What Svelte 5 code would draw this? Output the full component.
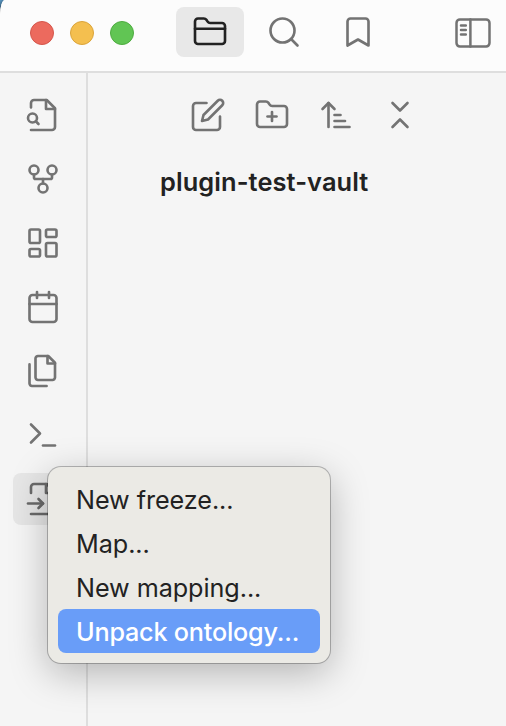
<script>
  const tabs = [
    {
      name: 'Files',
      active: true,
      paths: [
        'M20 20a2 2 0 0 0 2-2V8a2 2 0 0 0-2-2h-7.9a2 2 0 0 1-1.69-.9L9.6 3.9A2 2 0 0 0 7.93 3H4a2 2 0 0 0-2 2v13a2 2 0 0 0 2 2Z',
        'M2 9.8h20'
      ]
    },
    { name: 'Search', paths: ['M19 11a8 8 0 1 1-16 0 8 8 0 0 1 16 0z', 'm21 21-4.3-4.3'] },
    { name: 'Bookmarks', paths: ['m19 21-7-4-7 4V5a2 2 0 0 1 2-2h10a2 2 0 0 1 2 2v16z'] }
  ];

  const ribbon = [
    {
      name: 'Quick switcher',
      paths: [
        'M4 22h14a2 2 0 0 0 2-2V7.5L14.5 2H6a2 2 0 0 0-2 2v3',
        'M14 2v6h6',
        'M5 17a3 3 0 1 0 0-6 3 3 0 0 0 0 6z',
        'm9 18-1.8-1.8'
      ]
    },
    {
      name: 'Graph view',
      paths: [
        'M12 21a3 3 0 1 0 0-6 3 3 0 0 0 0 6z',
        'M6 9a3 3 0 1 0 0-6 3 3 0 0 0 0 6z',
        'M18 9a3 3 0 1 0 0-6 3 3 0 0 0 0 6z',
        'M18 9v2c0 .6-.4 1-1 1H7c-.6 0-1-.4-1-1V9',
        'M12 12v3'
      ]
    },
    {
      name: 'Canvas',
      paths: [
        'M4 3h5a1 1 0 0 1 1 1v7a1 1 0 0 1-1 1H4a1 1 0 0 1-1-1V4a1 1 0 0 1 1-1z',
        'M15 3h5a1 1 0 0 1 1 1v3a1 1 0 0 1-1 1h-5a1 1 0 0 1-1-1V4a1 1 0 0 1 1-1z',
        'M15 12h5a1 1 0 0 1 1 1v7a1 1 0 0 1-1 1h-5a1 1 0 0 1-1-1v-7a1 1 0 0 1 1-1z',
        'M4 16h5a1 1 0 0 1 1 1v3a1 1 0 0 1-1 1H4a1 1 0 0 1-1-1v-3a1 1 0 0 1 1-1z'
      ]
    },
    {
      name: 'Daily note',
      paths: [
        'M5 4h14a2 2 0 0 1 2 2v14a2 2 0 0 1-2 2H5a2 2 0 0 1-2-2V6a2 2 0 0 1 2-2z',
        'M16 2v4',
        'M8 2v4',
        'M3 10h18'
      ]
    },
    {
      name: 'Templates',
      paths: [
        'M15.5 2H8.6c-.4 0-.8.2-1.1.5-.3.3-.5.7-.5 1.1v12.8c0 .4.2.8.5 1.1.3.3.7.5 1.1.5h9.8c.4 0 .8-.2 1.1-.5.3-.3.5-.7.5-1.1V6.5L15.5 2z',
        'M3 7.6v12.8c0 .4.2.8.5 1.1.3.3.7.5 1.1.5h9.8',
        'M15 2v5h5'
      ]
    },
    { name: 'Command palette', paths: ['m4 17 6-6-6-6', 'M12 19h8'] },
    {
      name: 'Ontology',
      active: true,
      paths: [
        'M4 22h14a2 2 0 0 0 2-2V7.5L14.5 2H6a2 2 0 0 0-2 2v4',
        'M14 2v6h6',
        'M2 15h10',
        'm9 18 3-3-3-3'
      ]
    }
  ];

  const actions = [
    {
      name: 'New note',
      paths: [
        'M11 4H4a2 2 0 0 0-2 2v14a2 2 0 0 0 2 2h14a2 2 0 0 0 2-2v-7',
        'M18.5 2.5a2.12 2.12 0 0 1 3 3L12 15l-4 1 1-4 9.5-9.5z'
      ]
    },
    {
      name: 'New folder',
      paths: [
        'M4 20h16a2 2 0 0 0 2-2V8a2 2 0 0 0-2-2h-7.93a2 2 0 0 1-1.66-.9l-.82-1.2A2 2 0 0 0 7.93 3H4a2 2 0 0 0-2 2v13c0 1.1.9 2 2 2z',
        'M12 10v6',
        'M9 13h6'
      ]
    },
    { name: 'Sort order', paths: ['m3 8 4-4 4 4', 'M7 4v16', 'M11 12h4', 'M11 16h7', 'M11 20h10'] },
    { name: 'Collapse all', paths: ['m7 20 5-5 5 5', 'm7 4 5 5 5-5'] }
  ];

  const menu = ['New freeze...', 'Map...', 'New mapping...', 'Unpack ontology...'];
  let selected = $state(3);
</script>

{#snippet icon(paths)}
  <svg class="icon" viewBox="0 0 24 24" aria-hidden="true">
    {#each paths as d}<path {d} />{/each}
  </svg>
{/snippet}

<div class="desktop">
  <div class="window">
    <header>
      <div class="lights">
        <i class="close"></i><i class="minimize"></i><i class="zoom"></i>
      </div>
      <nav class="tabs">
        {#each tabs as tab}
          <button class="tab" class:active={tab.active} aria-label={tab.name}>{@render icon(tab.paths)}</button>
        {/each}
      </nav>
      <button class="toggle" aria-label="Toggle sidebar">
        <svg viewBox="0 0 36 30" aria-hidden="true">
          <rect x="1.5" y="1.5" width="33" height="27" rx="3.4" />
          <path d="M15.4 1.5v27M6 7.5h4.8M6 12h4.8M6 16.5h4.8" />
        </svg>
      </button>
    </header>
    <div class="body">
      <aside>
        {#each ribbon as item}
          <button class="ribbon-item" class:active={item.active} aria-label={item.name}>{@render icon(item.paths)}</button>
        {/each}
      </aside>
      <main>
        <div class="actions">
          {#each actions as action}
            <button aria-label={action.name}>{@render icon(action.paths)}</button>
          {/each}
        </div>
        <div class="vault">plugin-test-vault</div>
      </main>
    </div>
  </div>

  <div class="menu" role="menu">
    {#each menu as label, i}
      <button role="menuitem" class:selected={i === selected} onmouseenter={() => (selected = i)}>{label}</button>
    {/each}
  </div>
</div>

<style>
  .desktop {
    position: relative;
    width: 506px;
    height: 726px;
    overflow: hidden;
    background: linear-gradient(135deg, #5d9bc8 0, #39617f 5px, #222 9px);
    font-family: Inter, "Liberation Sans", sans-serif;
    color: #222;
  }
  .window {
    display: flex;
    flex-direction: column;
    height: 100%;
    overflow: hidden;
    background: #f5f5f5;
    border-top-left-radius: 5px 15px;
  }
  button {
    display: flex;
    align-items: center;
    justify-content: center;
    margin: 0;
    padding: 0;
    border: 0;
    background: none;
    color: #737373;
    font: inherit;
  }
  svg {
    display: block;
    flex: none;
    fill: none;
    stroke: currentColor;
    stroke-linecap: round;
    stroke-linejoin: round;
  }
  .icon {
    width: 36px;
    height: 36px;
    stroke-width: 1.75;
  }
  header {
    display: flex;
    flex: none;
    box-sizing: border-box;
    height: 73px;
    padding: 7px 15px 0 30px;
    background: #fcfcfc;
    border-bottom: 2px solid #dedede;
  }
  .lights {
    display: flex;
    gap: 16px;
    padding-top: 14px;
  }
  .lights i {
    box-sizing: border-box;
    width: 24px;
    height: 24px;
    border: 1px solid;
    border-radius: 50%;
  }
  .lights .close { background: #ec6a5e; border-color: #d5564b; }
  .lights .minimize { background: #f4bf4f; border-color: #dba43a; }
  .lights .zoom { background: #61c554; border-color: #4eac40; }
  .tabs {
    display: flex;
    gap: 6px;
    margin-left: 42px;
  }
  .tab {
    width: 68px;
    height: 50px;
    border-radius: 8px;
  }
  .tab.active {
    background: #e8e8e8;
    color: #222;
  }
  .toggle {
    height: 52px;
    margin-left: auto;
  }
  .toggle svg {
    width: 36px;
    height: 30px;
    stroke-width: 2.5;
  }
  .body {
    display: flex;
    flex: 1;
  }
  aside {
    display: flex;
    flex-direction: column;
    gap: 12px;
    box-sizing: border-box;
    width: 88px;
    padding: 16px 0 0 13px;
    border-right: 2px solid #dedede;
  }
  .ribbon-item {
    width: 60px;
    height: 52px;
    border-radius: 8px;
  }
  .ribbon-item.active {
    background: #e6e6e6;
    color: #6a6a6a;
  }
  main {
    flex: 1;
  }
  .actions {
    display: flex;
    gap: 28px;
    padding: 24px 0 0 102px;
  }
  .vault {
    padding: 33px 0 0 72px;
    font-size: 25.4px;
    font-weight: 600;
    line-height: 32px;
    letter-spacing: 0.1px;
    white-space: nowrap;
  }
  .menu {
    position: absolute;
    left: 48px;
    top: 467px;
    display: flex;
    flex-direction: column;
    box-sizing: border-box;
    width: 282px;
    height: 196px;
    padding: 10px;
    border-radius: 13px;
    background: #ebeae5;
    box-shadow: 0 0 0 1px rgba(0, 0, 0, 0.25), 0 10px 38px rgba(0, 0, 0, 0.27);
  }
  .menu button {
    justify-content: flex-start;
    height: 44px;
    padding: 2px 0 0 18px;
    border-radius: 8px;
    color: #222;
    font-size: 25.2px;
    line-height: 32px;
    letter-spacing: -0.06px;
    white-space: nowrap;
  }
  .menu button.selected {
    background: #699df8;
    color: #fff;
    font-weight: 500;
    letter-spacing: -0.2px;
  }
</style>
